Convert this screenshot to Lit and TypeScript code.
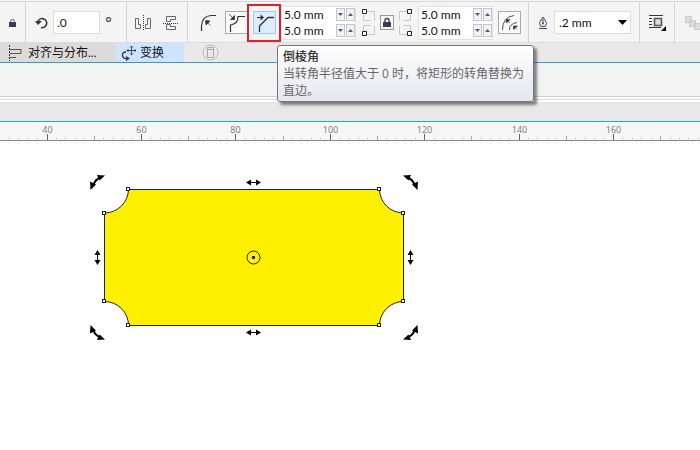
import { LitElement, html, css, svg } from "lit";
import { customElement } from "lit/decorators.js";

const corner = (flip: boolean) => svg`
  <g transform=${flip ? "translate(14 0) scale(-1 1)" : ""}>
    <path d="M6 3.500h7.500v9M2.500 7v5.500h7M6 26.500h7.500v-9M2.500 23v-5.500h7" stroke="#c8c8c8"/>
    <path d="M1.500 1.500h4v4h-4zM1.500 23.500h4v4h-4z" stroke="#222" fill="#fff"/>
  </g>`;

@customElement("app-root")
class AppRoot extends LitElement {
  static styles = css`
    :host { display: block; min-height: 100vh; background: #fff; overflow: hidden; color: #111;
      font: 12px/16px Lato, "Noto Sans CJK SC", sans-serif; }
    * { box-sizing: border-box; }
    svg { display: block; flex: none; fill: none; stroke: #333; }
    button, input, select { font: inherit; color: inherit; margin: 0; padding: 0; border: 0; border-radius: 0; background: none; outline: 0; }
    button { flex: none; display: flex; align-items: center; justify-content: center; }
    .toolbar { display: flex; height: 43px; padding-top: 2px; background: linear-gradient(#d9d9d9 0 0) 0 1px / 100% 1px no-repeat #f4f4f4;
      border-bottom: 1px solid #dcdcdc; }
    .group { display: flex; align-items: center; flex: none; gap: 5px; padding: 0 8px; height: 41px; border-left: 1px solid #d6d6d6; }
    .group.first { border-left: 0; }
    .group.angle { padding-right: 14px; }
    .group.mirror { gap: 12px; }
    .group.corners { padding: 0 7px 0 12px; }
    .box { width: 47px; height: 23px; padding-left: 3px; background: #fff; border: 1px solid #ddd; }
    .degree { width: 7px; font: 16px/16px "Open Sans", sans-serif; color: #333; }
    .round { width: 20px; justify-content: flex-start; }
    .tool { position: relative; width: 23px; height: 23px; border: 1px solid #aaa; background: #fafafa; }
    .tool.active { background: #dcedfd; border-color: #9bc9f2; }
    .tool.active::after { content: ""; position: absolute; inset: -8px -6px -9px -7px; border: 2px solid #d8232d; pointer-events: none; }
    .radii { width: 75px; background: #fff; border: 1px solid #e2e2e2; }
    .radius { display: flex; align-items: center; height: 16px; gap: 1px; }
    .radius input { flex: 1; min-width: 0; width: 0; padding-left: 2px; height: 16px; }
    .spin { width: 9px; height: 13px; border: 1px solid #c4c4cc; background: #f2f2f4; }
    .lock { width: 14px; height: 15px; border: 1px solid #999; background: #fafafa; }
    .pick { position: relative; }
    select { appearance: none; display: block; width: 77px; height: 23px; padding-left: 4px; background: #fff; border: 1px solid #ddd; }
    .pick svg { position: absolute; right: 4px; top: 9px; pointer-events: none; }
    .tabs { display: flex; height: 19px; background: #ebe9e8; }
    .tab { padding: 0 5px; gap: 4px; justify-content: flex-start; background: #dddbda; width: 116px; }
    .tab.align { padding-left: 8px; gap: 4px; }
    .tab.current { width: 68px; background: #cce4ff; }
    .add { width: 52px; }
    .panel { height: 40px; border-top: 1px solid #2a9fd6; background: linear-gradient(#f3f3f3 0 33px, #d0d0d0 33px 34px, #fff 34px 36px, #d8d8d8 36px 37px, #fff 37px); }
    .band { height: 20px; background: #e9e8e8; border-bottom: 1px solid #16a8d0; }
    .ruler { height: 19px; background: #f6f6f6; border-bottom: 1px solid #888; overflow: hidden; }
    .ruler text { font: 9px "Open Sans", sans-serif; fill: #777; stroke: none; text-anchor: middle; }
    .canvas { padding: 31px 0 0 86px; }
    .tip { position: absolute; left: 277px; top: 45px; width: 257px; padding: 2px 5px; line-height: 17px;
      font-family: "Open Sans", "Noto Sans CJK SC", sans-serif;
      color: #666; background: linear-gradient(#fff, #e5e5f0); border: 1px solid #777; border-radius: 3px; box-shadow: 3px 3px 3px #0007; }
    .tip b { display: block; font-weight: 500; color: #333; }
  `;

  connectedCallback() {
    super.connectedCallback();
    window.addEventListener("resize", this.redraw);
  }

  disconnectedCallback() {
    window.removeEventListener("resize", this.redraw);
    super.disconnectedCallback();
  }

  redraw = () => this.requestUpdate();

  radii(side: string) {
    return html`<div class="radii">${["top", "bottom"].map(v => html`
      <div class="radius">
        <input aria-label="${v} ${side} radius" value="5.0 mm">
        <button class="spin" aria-label="Decrease"><svg width="7" height="5"><path d="M1 1h5L3.500 4z" fill="#55558a" stroke="none"/></svg></button>
        <button class="spin" aria-label="Increase"><svg width="7" height="5"><path d="M1 4h5L3.500 1z" fill="#55558a" stroke="none"/></svg></button>
      </div>`)}</div>`;
  }

  ruler() {
    const count = Math.ceil(window.innerWidth / 9.44);
    return Array.from({ length: count }, (_, i) => {
      const value = 30 + i * 2;
      const x = Math.floor(47 + (value - 40) * 4.72) + 0.5;
      const len = value % 20 === 0 ? 6 : value % 10 === 0 ? 4 : 2;
      const labelled = len === 6 && x < window.innerWidth - 12;
      return svg`<path d="M${x} ${18 - len}V${len > 2 ? 18 : 17}" stroke=${len > 4 ? "#666" : "#aaa"}/>
        ${labelled ? svg`<text x=${x} y="11">${value}</text>` : ""}`;
    });
  }

  render() {
    const turn = svg`<path d="M93 186Q95 179 101 177.500" stroke="#000" stroke-width="2"/>
      <path d="M105 175.500L97 175l2.500 5.500zM90.500 190l-.5-8.500 6 3z" fill="#000" stroke="none"/>`;
    const slide = svg`<path d="M-5 0H5" stroke="#000"/><path d="M-7.500 0l5-3v6zM7.500 0l-5-3v6z" fill="#000" stroke="none"/>`;
    return html`
      <div class="toolbar" role="toolbar">
        <div class="group first">
          <button aria-label="Lock ratio"><svg width="9" height="12"><path d="M2.500 6V4.500Q2.500 2.500 4.500 2.500T6.500 4.500" stroke="#556"/><path d="M1 5h7v5H1z" fill="#3b3b55" stroke="none"/></svg></button>
        </div>
        <div class="group angle">
          <svg width="14" height="14"><path d="M4 5.500A4.500 4.500 0 1 1 7 11.500" stroke-width="1.600"/><path d="M1 5h7L4 9z" fill="#333" stroke="none"/></svg>
          <input class="box" aria-label="Angle" value=".0"><span class="degree">°</span>
        </div>
        <div class="group mirror">
          <button aria-label="Mirror horizontally"><svg width="16" height="16"><path d="M.5 3.500h3v6h2v4h-5zM15.500 3.500h-3v6h-2v4h5z" stroke="#667"/><path d="M8.500 0v16" stroke-dasharray="1 1"/></svg></button>
          <button aria-label="Mirror vertically"><svg width="16" height="16"><path d="M3.500 1.500h9v3h-5v2h-4zM3.500 14.500h9v-3h-5v-2h-4z" stroke="#667"/><path d="M0 8.500h16" stroke-dasharray="1 1"/></svg></button>
        </div>
        <div class="group corners">
          <button class="round" aria-label="Round corner"><svg width="17" height="17"><path d="M1.500 17V12Q2 2 11 1.500h5" stroke-width="1.200"/><path d="M10.500 11.500L7 8M5.500 6.500l4.500.5-4 4z" fill="#333" stroke-width=".7"/></svg></button>
          <button class="tool" aria-label="Scalloped corner"><svg width="21" height="21"><path d="M4.500 20v-7Q12 12 12 4.500h7" stroke-width="1.200"/><path d="M3 2l5 5M8.500 7.500H4.500L8.500 3.500z" fill="#333" stroke-width=".8"/></svg></button>
          <button class="tool active" aria-label="倒棱角" aria-describedby="tip"><svg width="21" height="21"><path d="M5.500 20v-6L14 5.500h6" stroke-width="1.300"/><path d="M3 5.500h5"/><path d="M6.500 2.500L10 5.500 6.500 8.500z" fill="#333" stroke="none"/></svg></button>
          ${this.radii("left")}
          <svg width="14" height="30">${corner(false)}</svg>
          <button class="lock" aria-label="Edit corners together"><svg width="10" height="11"><path d="M3 5V3.500Q3 1.500 5 1.500T7 3.500V5" stroke="#3b3b55" stroke-width="1.400"/><path d="M1 5h8v5H1z" fill="#3b3b55" stroke="none"/></svg></button>
          <svg width="14" height="30">${corner(true)}</svg>
          ${this.radii("right")}
          <button class="tool" aria-label="Relative corner scaling"><svg width="21" height="21"><path d="M3.500 18Q3.500 5 15 3.500M10.500 18Q10 12 18 10.500" stroke="#555"/><path d="M11 11L8.500 8.500M7 7.500h4L7.500 11zM14.500 14h4L14.500 17.500zM18 17.500L16 15.500" fill="#333" stroke-width=".6"/></svg></button>
        </div>
        <div class="group">
          <svg width="12" height="14"><path d="M6 1Q2.500 6 2.500 7.500L4 10.500h4L9.500 7.500Q9.500 6 6 1zM6 3v4M2 12.500h8" stroke="#445"/><circle cx="6" cy="7.500" r="1" fill="#445" stroke="none"/></svg>
          <div class="pick"><select aria-label="Outline width"><option>.2 mm</option></select><svg width="9" height="6"><path d="M0 0h9L4.500 5z" fill="#000" stroke="none"/></svg></div>
        </div>
        <div class="group">
          <button aria-label="Wrap text"><svg width="18" height="18"><path d="M1 1.500h14M1 4.500h3M1 7.500h3M1 10.500h3M1 13.500h12" stroke="#334"/><path d="M6.500 4.500h7v7h-7z" stroke="#556" stroke-width="1.600" fill="#ddd"/><path d="M18 12v5h-5z" fill="#000" stroke="none"/></svg></button>
        </div>
        <div class="group">
          <button aria-label="Combine"><svg width="20" height="18"><path d="M2.500 2.500h6v6h-6zM6.500 6.500h6v6h-6zM11.500 9.500h6v6h-6z" fill="#ddd" stroke="#ccc"/></svg></button>
        </div>
      </div>
      <div class="tabs" role="tablist">
        <button class="tab align" role="tab"><svg width="16" height="16"><path d="M1.500 0v16" stroke-dasharray="2 1"/><path d="M2 4.500h11v4H2M2 12.500h6" stroke="#555"/></svg>对齐与分布...</button>
        <button class="tab current" role="tab" aria-selected="true"><svg width="15" height="16"><path d="M5 7Q1 7 1.500 10.500T6 13.500" stroke="#335" stroke-width="1.300"/><path d="M5 11l4 2.500-4 2.500z" fill="#335" stroke="none"/><path d="M10.500 1v9M6 5.500h9M9 2.500l1.500-1.500L12 2.500M9 8.500l1.500 1.500L12 8.500M7.500 4L6 5.500 7.500 7M13.500 4L15 5.500 13.500 7" stroke="#335" stroke-width=".9"/></svg>变换</button>
        <button class="add" aria-label="Add panel"><svg width="17" height="17"><circle cx="8.500" cy="8.500" r="7.500" stroke="#bbb"/><path d="M5.500 3.500h6v10h-6zM5.500 5.500h6" stroke="#aaa"/></svg></button>
      </div>
      <div class="panel"></div>
      <div class="band"></div>
      <div class="ruler"><svg width="100%" height="18">${this.ruler()}</svg></div>
      <main class="canvas">
        <svg width="336" height="172" viewBox="86 172 336 172">
          <path d="M128.500 189.500H379.500A24 24 0 0 0 403.500 213V301.500A24 24 0 0 0 379.500 325.500H128.500A24 24 0 0 0 104.500 301.500V213A24 24 0 0 0 128.500 189.500z" fill="#fff000" stroke="#222"/>
          ${[[128, 189], [379, 189], [104, 213], [403, 213], [104, 301], [403, 301], [128, 325], [379, 325]].map(([x, y]) =>
            svg`<rect x=${x - 1.5} y=${y - 1.5} width="3" height="3" fill="#fff" stroke="#222"/>`)}
          ${["", "translate(508 0) scale(-1 1)", "translate(0 515) scale(1 -1)", "translate(508 515) scale(-1 -1)"].map(t => svg`<g transform=${t}>${turn}</g>`)}
          ${["translate(253.500 182.500)", "translate(253.500 332.500)", "translate(97.500 257.500) rotate(90)", "translate(410.500 257.500) rotate(90)"].map(t => svg`<g transform=${t}>${slide}</g>`)}
          <circle cx="253.500" cy="257.500" r="6.500" stroke="#222"/><rect x="252" y="256" width="3" height="3" fill="#225" stroke="none"/>
        </svg>
      </main>
      <div class="tip" id="tip" role="tooltip"><b>倒棱角</b>当转角半径值大于 0 时，将矩形的转角替换为直边。</div>`;
  }
}
